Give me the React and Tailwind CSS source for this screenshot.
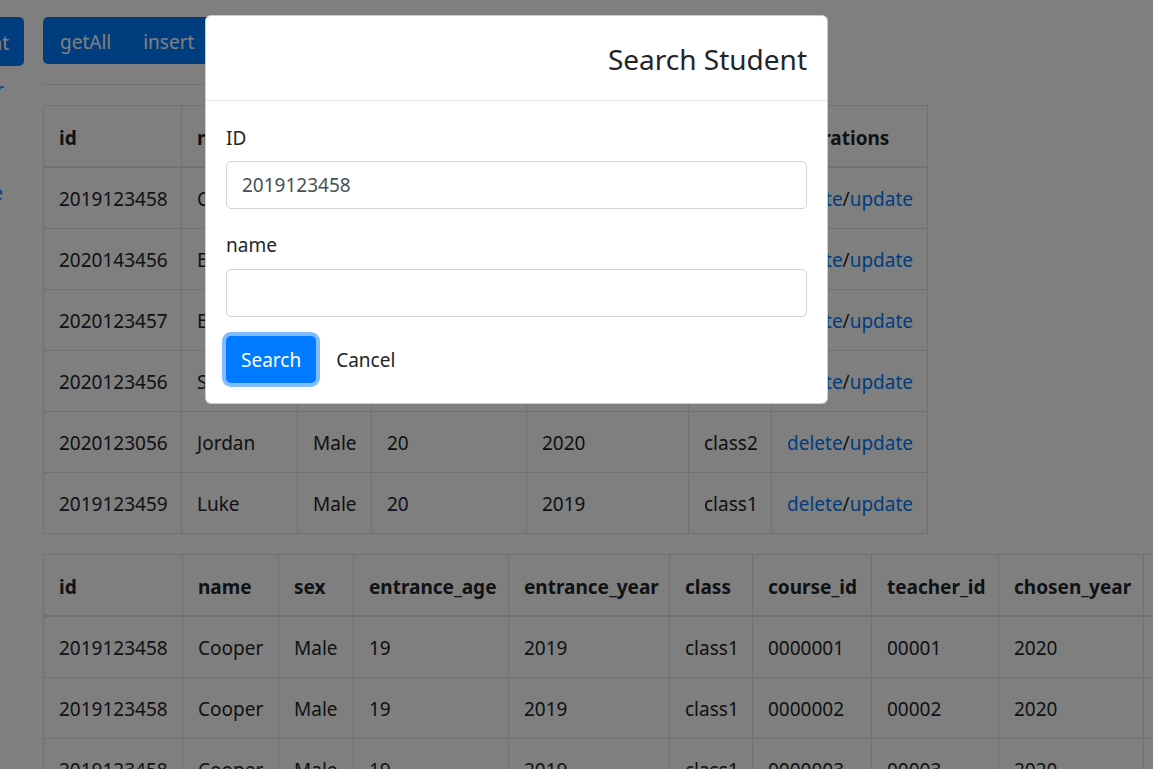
import React from 'react';

const first = [
  ['2019123458', 'Cooper', 'Male', '19', '2019', 'class1'],
  ['2020143456', 'Bella', 'Female', '20', '2020', 'class2'],
  ['2020123457', 'Brown', 'Male', '20', '2020', 'class2'],
  ['2020123456', 'Sam', 'Male', '20', '2020', 'class2'],
  ['2020123056', 'Jordan', 'Male', '20', '2020', 'class2'],
  ['2019123459', 'Luke', 'Male', '20', '2019', 'class1'],
];

const second = [
  ['2019123458', 'Cooper', 'Male', '19', '2019', 'class1', '0000001', '00001', '2020', '90'],
  ['2019123458', 'Cooper', 'Male', '19', '2019', 'class1', '0000002', '00002', '2020', '85'],
  ['2019123458', 'Cooper', 'Male', '19', '2019', 'class1', '0000003', '00003', '2020', '88'],
];

const th = 'border border-[#dee2e6] border-b-2 px-[15px] pt-[17px] pb-[13px] text-left font-bold align-bottom';
const td = 'border border-[#dee2e6] px-[15px] pt-[16px] pb-[14px] align-top';

function FirstTable() {
  const cols = [138, 116, 74, 155, 162, 83, 156];
  const heads = ['id', 'name', 'sex', 'entrance_age', 'entrance_year', 'class', 'operations'];
  return (
    <table className="table-fixed border-collapse w-[884px] mb-[20px]">
      <colgroup>
        {cols.map((w, i) => <col key={i} style={{ width: w }} />)}
      </colgroup>
      <thead>
        <tr>{heads.map((h) => <th key={h} className={th}>{h}</th>)}</tr>
      </thead>
      <tbody>
        {first.map((r, i) => (
          <tr key={i}>
            {r.map((c, j) => <td key={j} className={td}>{c}</td>)}
            <td className={td}>
              <a href="#" className="text-[#007bff]">delete</a>/<a href="#" className="text-[#007bff]">update</a>
            </td>
          </tr>
        ))}
      </tbody>
    </table>
  );
}

function SecondTable() {
  const cols = [139, 96, 75, 155, 161, 83, 119, 127, 145, 120];
  const heads = ['id', 'name', 'sex', 'entrance_age', 'entrance_year', 'class', 'course_id', 'teacher_id', 'chosen_year', 'score'];
  return (
    <table className="table-fixed border-collapse w-[1220px]">
      <colgroup>
        {cols.map((w, i) => <col key={i} style={{ width: w }} />)}
      </colgroup>
      <thead>
        <tr>{heads.map((h) => <th key={h} className={th}>{h}</th>)}</tr>
      </thead>
      <tbody>
        {second.map((r, i) => (
          <tr key={i}>
            {r.map((c, j) => <td key={j} className={td}>{c}</td>)}
          </tr>
        ))}
      </tbody>
    </table>
  );
}

export default function App() {
  return (
    <div className="relative h-screen w-full overflow-hidden bg-white text-[19px] leading-[30px] text-[#212529] font-['Noto_Sans',sans-serif]">
      <div className="flex pt-[17px]">
        {/* sidebar, mostly scrolled out of view */}
        <aside className="-ml-[116px] w-[140px] shrink-0 flex flex-col items-end">
          <button className="h-[49px] px-[15px] pt-[2px] rounded-[5px] bg-[#007bff] text-white whitespace-nowrap">Student</button>
          <a href="#" className="mt-[9px] pr-[20px] text-[#007bff]">Teacher</a>
          <a href="#" className="mt-[73px] pr-[21px] text-[#007bff]">Course</a>
        </aside>

        <main className="ml-[19px] shrink-0">
          <div className="flex h-[47px] w-fit rounded-[5px] bg-[#007bff] text-white overflow-hidden">
            <button className="px-[17px] pt-[2px]">getAll</button>
            <button className="px-[15px] pt-[2px]">insert</button>
            <button className="px-[15px] pt-[2px]">search</button>
          </div>
          <hr className="mt-[20px] mb-[20px] w-[700px] border-t border-[#dee2e6]" />
          <FirstTable />
          <SecondTable />
        </main>
      </div>

      <div className="absolute inset-0 bg-black/50" />

      {/* modal */}
      <div className="absolute left-[205px] top-[15px] w-[623px] rounded-[6px] border border-black/20 bg-white">
        <div className="flex justify-end border-b border-[#dee2e6] px-[20px] py-[19px]">
          <h4 className="pt-[2px] text-[28px] leading-[44px] font-normal">Search Student</h4>
        </div>
        <div className="p-[20px]">
          <div className="mb-[20px]">
            <label className="mb-[10px] block pt-[4px] leading-[26px]">ID</label>
            <input
              defaultValue="2019123458"
              className="block h-[48px] w-full rounded-[5px] border border-[#ced4da] px-[15px] text-[#495057] outline-none"
            />
          </div>
          <div className="mb-[19px]">
            <label className="mb-[10px] block pt-[3px] leading-[27px]">name</label>
            <input className="block h-[48px] w-full rounded-[5px] border border-[#ced4da] px-[15px] text-[#495057] outline-none" />
          </div>
          <div className="flex items-center">
            <button className="h-[47px] px-[15px] rounded-[5px] bg-[#007bff] text-white shadow-[0_0_0_4px_rgba(0,123,255,0.5)]">Search</button>
            <button className="ml-[5px] h-[47px] px-[15px] text-[#212529]">Cancel</button>
          </div>
        </div>
      </div>
    </div>
  );
}
